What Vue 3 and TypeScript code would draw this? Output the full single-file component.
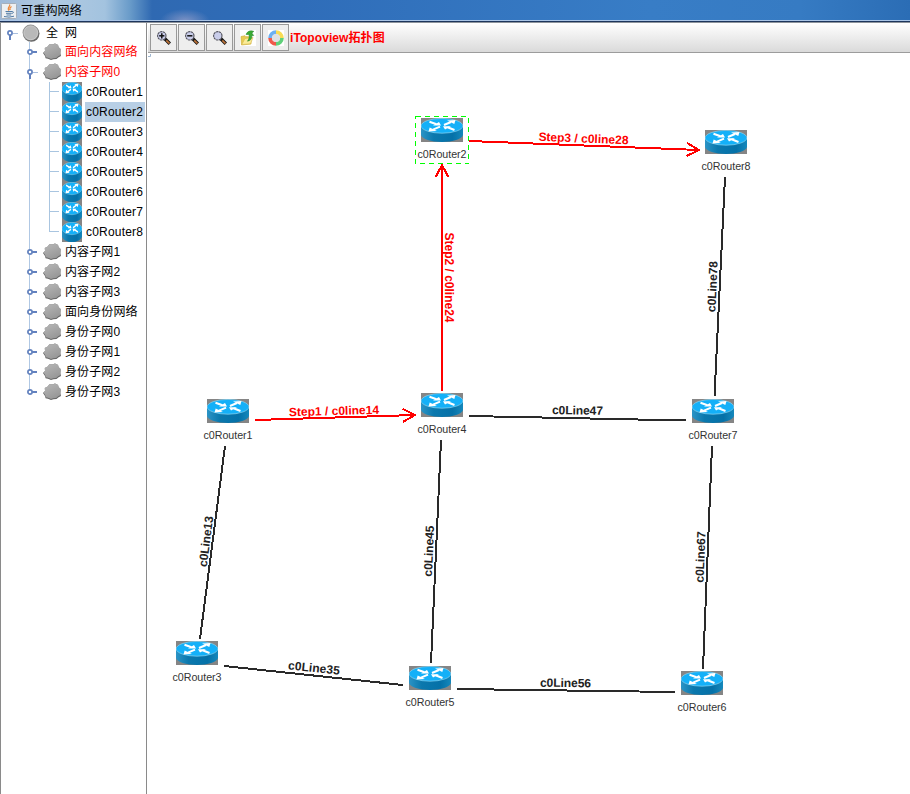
<script setup lang="ts">
import { ref } from 'vue'

interface TreeRow {
  label: string
  kind: 'root' | 'cloud' | 'router'
  open?: boolean
  active?: boolean
}
interface RouterNode { id: number; x: number; y: number }
interface Link {
  label: string
  from: [number, number]
  to: [number, number]
  at: [number, number]
  angle: number
  length: number
  step?: boolean
}

const selected = ref('c0Router2')

const rows: TreeRow[] = [
  { label: '全 网', kind: 'root', open: true },
  { label: '面向内容网络', kind: 'cloud', active: true },
  { label: '内容子网0', kind: 'cloud', open: true, active: true },
  ...[1, 2, 3, 4, 5, 6, 7, 8].map((n): TreeRow => ({ label: `c0Router${n}`, kind: 'router' })),
  { label: '内容子网1', kind: 'cloud' },
  { label: '内容子网2', kind: 'cloud' },
  { label: '内容子网3', kind: 'cloud' },
  { label: '面向身份网络', kind: 'cloud' },
  { label: '身份子网0', kind: 'cloud' },
  { label: '身份子网1', kind: 'cloud' },
  { label: '身份子网2', kind: 'cloud' },
  { label: '身份子网3', kind: 'cloud' },
]

const nodes: RouterNode[] = [
  { id: 1, x: 207, y: 399 },
  { id: 2, x: 421, y: 118 },
  { id: 3, x: 176, y: 641 },
  { id: 4, x: 421, y: 393 },
  { id: 5, x: 409, y: 666 },
  { id: 6, x: 681, y: 671 },
  { id: 7, x: 692, y: 399 },
  { id: 8, x: 705, y: 130 },
]

const links: Link[] = [
  { label: 'Step1 / c0line14', from: [255, 420], to: [415, 415], at: [334, 411], angle: -1.5, length: 90, step: true },
  { label: 'Step2 / c0line24', from: [442, 391], to: [442, 165], at: [449, 277.5], angle: 90, length: 90, step: true },
  { label: 'Step3 / c0line28', from: [469, 141], to: [699, 150], at: [583.5, 138.5], angle: 2.2, length: 90, step: true },
  { label: 'c0Line78', from: [725, 177], to: [714.5, 396], at: [712.5, 286.5], angle: -87.4, length: 51 },
  { label: 'c0Line47', from: [469, 416], to: [686, 420.5], at: [577.5, 410.5], angle: 1, length: 51 },
  { label: 'c0Line13', from: [225, 446], to: [200, 639], at: [206, 541.5], angle: -82.6, length: 51 },
  { label: 'c0Line35', from: [224, 666], to: [403, 685], at: [314, 668], angle: 6, length: 52 },
  { label: 'c0Line45', from: [441, 440], to: [431, 663], at: [429, 551], angle: -87.4, length: 51 },
  { label: 'c0Line56', from: [457, 689], to: [675, 692], at: [565.5, 683], angle: 0.8, length: 51 },
  { label: 'c0Line67', from: [712, 446], to: [703, 669], at: [700.5, 557], angle: -87.7, length: 51 },
]

function arrowHead(link: Link): string {
  const a = Math.atan2(link.to[1] - link.from[1], link.to[0] - link.from[0])
  const wing = (d: number) =>
    `${link.to[0] - 14 * Math.cos(a + d)},${link.to[1] - 14 * Math.sin(a + d)}`
  return `${wing(0.49)} ${link.to[0]},${link.to[1]} ${wing(-0.49)}`
}
</script>

<template>
  <div class="window">
    <svg class="symbols" aria-hidden="true">
      <defs>
        <linearGradient id="bodyFill" x1="0" x2="1" y1="0" y2="0">
          <stop offset="0" stop-color="#2b94c6" />
          <stop offset="0.3" stop-color="#0b78ad" />
          <stop offset="0.75" stop-color="#0571a8" />
          <stop offset="1" stop-color="#1588bc" />
        </linearGradient>
        <linearGradient id="grayFill" x1="0" x2="0.5" y1="0" y2="1">
          <stop offset="0" stop-color="#b9b9b9" />
          <stop offset="1" stop-color="#989898" />
        </linearGradient>
        <symbol id="router" viewBox="0 0 42 24" preserveAspectRatio="none">
          <rect width="42" height="24" fill="#858585" />
          <path d="M0 7.5V17C1 21 10 24 21 24S41 21 42 17V7.5Z" fill="url(#bodyFill)" />
          <ellipse cx="21" cy="7.8" rx="20.8" ry="7.4" fill="#14b0f8" stroke="#8cd2ee" stroke-width=".7" />
          <path d="M8.5 3.8l7 2.5M33.5 12l-7-2.7M23 7l7-3M19 8.6l-7 3" stroke="#fff" stroke-width="2" />
          <path d="M20 7.4h-8l6-3.4zM22 8.2h8l-6 3.4zM26 2.6l8.5-.6-1.2 4zM16 13l-8.5.4 1.2-4z" fill="#fff" />
        </symbol>
      </defs>
    </svg>

    <header class="titlebar">
      <svg class="java" viewBox="0 0 16 16">
        <rect x=".5" y=".5" width="15" height="15" rx="1" fill="#edf0f2" stroke="#a5afba" />
        <path d="M8.5 1.5C10 3 5.5 4.5 8 7.5M10.5 3.5C8.5 5 8.5 5.5 9.3 7" fill="none" stroke="#ed8a3c" stroke-width="1.3" />
        <path d="M4.5 8.5h6.5M5 10.3h5.7M5.5 12h4.7M3 13.5q5 1.4 10-.3M11 8.5q3 .2 0 2.3" fill="none" stroke="#527ca5" stroke-width="1" />
      </svg>
      <span class="title">可重构网络</span>
    </header>

    <div class="body">
      <aside class="tree">
        <div
          v-for="(row, i) in rows"
          :key="row.label"
          class="row"
          :class="[row.kind, { active: row.active, last: i === 10, end: i === rows.length - 1 }]"
          @click="selected = row.label"
        >
          <span v-if="row.kind !== 'root'" class="rail" />
          <span v-if="row.kind === 'router'" class="branch" />
          <svg v-else class="handle" viewBox="0 0 12 20">
            <template v-if="row.open">
              <path d="M7 10.5h5" stroke="#a9bfdf" />
              <path d="M4 12v5" stroke="#6382bf" stroke-width="2" />
            </template>
            <path v-else d="M6 10h5" stroke="#6382bf" stroke-width="2" />
            <circle cx="4" cy="10" r="2.1" fill="#fff" stroke="#6382bf" stroke-width="1.7" />
          </svg>
          <svg v-if="row.kind === 'root'" class="icon" viewBox="0 0 18 18">
            <circle cx="9.3" cy="9.6" r="8.2" fill="#686868" />
            <circle cx="8.6" cy="8.6" r="8" fill="#939393" />
            <circle cx="8.8" cy="8.8" r="6.9" fill="#b9b9b9" stroke="#d2d2d2" stroke-width=".8" />
          </svg>
          <svg v-else-if="row.kind === 'cloud'" class="icon" viewBox="0 0 18 18">
            <path id="cloudShade" d="M0 10L2 8 1.8 5 4.5 3.8 6.5 1.2 9.5 1.6 12 .6 15 2 15.6 4.3 17.6 6 17.4 10.5 18 13 15.6 14.2 13.5 16 10.5 16.2 8 17 5 15.8 2.6 15.2 2 13z" fill="#646464" />
            <path d="M.4 9.5L2 8 1.8 5 4.5 3.6 6.5 1 9.5 1.4 12 .4 15 1.8 15.6 4 17.6 6 17.2 10 17.6 12 15.2 13.2 13.2 15 10.4 15.2 8 16 5.2 14.8 2.8 14.2 2.2 12z" fill="url(#grayFill)" />
          </svg>
          <svg v-else class="icon"><use href="#router" width="20" height="20" /></svg>
          <span class="label" :class="{ selected: selected === row.label }">{{ row.label }}</span>
        </div>
      </aside>

      <main class="main">
        <nav class="toolbar">
          <button v-for="tool in ['in', 'out', 'fit']" :key="tool" class="tool">
            <svg viewBox="0 0 16 16">
              <path d="M8.8 8.8l5 5" stroke="#151515" stroke-width="3.4" />
              <path d="M10.3 10.3l3.2 3.2" stroke="#c2763a" stroke-width="1.7" />
              <circle cx="5.8" cy="5.8" r="4.2" fill="#c9cdea" stroke="#55555f" stroke-width="1.1" stroke-dasharray="2.4 .5" />
              <path v-if="tool !== 'fit'" d="M3.2 5.8h5.2" stroke="#111" stroke-width="1.5" />
              <path v-if="tool === 'in'" d="M5.8 3.2v5.2" stroke="#111" stroke-width="1.5" />
            </svg>
          </button>
          <button class="tool">
            <svg viewBox="0 0 16 16">
              <rect width="16" height="16" fill="#fff" />
              <path d="M1 6.5l4-.8 1 1h5v7.3l-9.5 1z" fill="#e8cb52" stroke="#c9a935" stroke-width=".6" />
              <path d="M1.8 14.5L5 8.5l8-1-2.5 6.3z" fill="#fbec98" stroke="#d6ba50" stroke-width=".6" />
              <path d="M7.5 11.2c3.2-.6 4.6-2.6 4.2-5.4l2-.3L11.8 3l2-1.6C11 .2 7.6.8 6 4.4l3 .2c.6 2.4 0 4.4-1.5 6.6z" fill="#3aab34" stroke="#1c7d22" stroke-width=".5" />
            </svg>
          </button>
          <button class="tool">
            <svg viewBox="0 0 16 16">
              <rect width="16" height="16" fill="#fff" />
              <g fill="none" stroke-width="4">
                <path d="M8 2.2A5.8 5.8 0 0 1 13.8 8" stroke="#f8dc55" />
                <path d="M13.8 8A5.8 5.8 0 0 1 8 13.8" stroke="#5fd07a" />
                <path d="M8 13.8A5.8 5.8 0 0 1 2.2 8" stroke="#f0594b" />
                <path d="M2.2 8A5.8 5.8 0 0 1 8 2.2" stroke="#6db0f2" />
              </g>
              <circle cx="8" cy="8" r="4.1" fill="#dfe1e4" />
            </svg>
          </button>
          <span class="brand">iTopoview拓扑图</span>
        </nav>

        <svg class="canvas" width="762" height="741" viewBox="148 53 762 741">
          <path d="M148 56.5h2.5V54" fill="none" stroke="#9fb6cf" />
          <g v-for="link in links" :key="link.label" :class="['link', { step: link.step }]">
            <line :x1="link.from[0]" :y1="link.from[1]" :x2="link.to[0]" :y2="link.to[1]" />
            <polyline v-if="link.step" :points="arrowHead(link)" />
            <text
              :transform="`translate(${link.at[0]} ${link.at[1]}) rotate(${link.angle})`"
              y="4"
              :textLength="link.length"
            >{{ link.label }}</text>
          </g>
          <g v-for="node in nodes" :key="node.id" class="node" @click="selected = `c0Router${node.id}`">
            <use href="#router" :x="node.x" :y="node.y" width="42" height="24" />
            <text :x="node.x + 21" :y="node.y + 40" textLength="49">c0Router{{ node.id }}</text>
            <rect
              v-if="selected === `c0Router${node.id}`"
              class="marquee"
              :x="node.x - 5.5"
              :y="node.y - 1.5"
              width="53"
              height="47"
            />
          </g>
        </svg>
      </main>
    </div>
  </div>
</template>

<style>
body {
  overflow: hidden;
  background: #fff;
}
</style>

<style scoped>
.window {
  display: flex;
  flex-direction: column;
  width: 910px;
  height: 794px;
  font: 12px/20px 'Liberation Sans', 'Noto Sans CJK SC', sans-serif;
  color: #000;
}
.symbols {
  position: absolute;
  width: 0;
  height: 0;
}
.titlebar {
  display: flex;
  align-items: center;
  box-sizing: border-box;
  height: 22px;
  flex: none;
  padding-left: 1px;
  border-bottom: 1px solid #1d355c;
  box-shadow: inset 0 -1px #a9c4e6;
  background:
    radial-gradient(ellipse 25px 12px at 185px 21px, rgba(178, 174, 208, 0.6), transparent),
    linear-gradient(90deg, #9db9d8 0, #b2cbe2 50px, #a3c3df 105px, #699bc9 130px, #2f69b2 152px, #2f6db9 300px, #387dc6 650px, #367bc3 800px, #2b6db5 910px);
}
.java {
  width: 16px;
  height: 16px;
  margin-top: 1px;
}
.title {
  margin: 0 0 0 4px;
  letter-spacing: 0.2px;
}
.body {
  display: flex;
  flex: 1;
  min-height: 0;
  border-top: 1px solid #8e949c;
}
.tree {
  box-sizing: border-box;
  width: 147px;
  flex: none;
  border: solid #8a8a8a;
  border-width: 0 1px;
}
.row {
  display: flex;
  align-items: center;
  position: relative;
  height: 20px;
  white-space: pre;
}
.row.root {
  height: 19px;
  padding-left: 5px;
}
.row.cloud {
  padding-left: 25px;
}
.row.router {
  padding-left: 61px;
}
.handle {
  position: relative;
  width: 12px;
  height: 20px;
  flex: none;
}
.icon {
  width: 18px;
  height: 18px;
  flex: none;
}
.root .icon {
  margin-left: 4px;
}
.cloud .icon {
  margin-left: 5px;
}
.router .icon {
  width: 20px;
  height: 20px;
}
.rail {
  position: absolute;
  left: 28px;
  top: 0;
  width: 1px;
  height: 20px;
  background: #b0c8e4;
}
.row.end .rail {
  height: 10px;
}
.branch {
  position: absolute;
  left: 48px;
  top: 0;
  width: 9px;
  height: 9px;
  border: solid #a9c5e0;
  border-width: 0 0 1px 1px;
}
.branch::after {
  content: '';
  position: absolute;
  left: -1px;
  top: 10px;
  width: 1px;
  height: 10px;
  background: #a9c5e0;
}
.last .branch::after {
  display: none;
}
.label {
  margin-left: 4px;
  letter-spacing: 0.1px;
}
.root .label {
  margin-left: 6px;
  word-spacing: 3.5px;
}
.router .label {
  margin-left: 3px;
  padding: 0 2px 0 1px;
  letter-spacing: 0.19px;
}
.label.selected {
  background: #b8cfe5;
}
.active .label {
  color: #f00;
}
.main {
  display: flex;
  flex-direction: column;
  width: 762px;
  margin-left: 1px;
}
.toolbar {
  display: flex;
  align-items: center;
  box-sizing: border-box;
  height: 30px;
  flex: none;
  gap: 1px;
  padding-left: 2px;
  border-bottom: 1px solid #9c9c9c;
  background: linear-gradient(#fff, #dadada);
}
.tool {
  display: flex;
  align-items: center;
  justify-content: center;
  box-sizing: border-box;
  width: 27px;
  height: 27px;
  padding: 0;
  border: 1px solid #999;
  background: #eee;
}
.tool svg {
  width: 16px;
  height: 16px;
}
.brand {
  letter-spacing: 0.08px;
  font-weight: 700;
  color: #f00;
}
.canvas {
  display: block;
}
.link line,
.link polyline {
  fill: none;
  stroke: #2a2a2a;
  stroke-width: 2;
  shape-rendering: crispEdges;
}
.link text {
  fill: #222;
  font-size: 12px;
  font-weight: 700;
  text-anchor: middle;
}
.link.step line,
.link.step polyline {
  stroke: #f00;
}
.link.step text {
  fill: #f00;
}
.node text {
  fill: #333;
  font-size: 10.7px;
  text-anchor: middle;
}
.marquee {
  fill: none;
  stroke: #0f0;
  stroke-dasharray: 5 4;
  shape-rendering: crispEdges;
}
</style>
